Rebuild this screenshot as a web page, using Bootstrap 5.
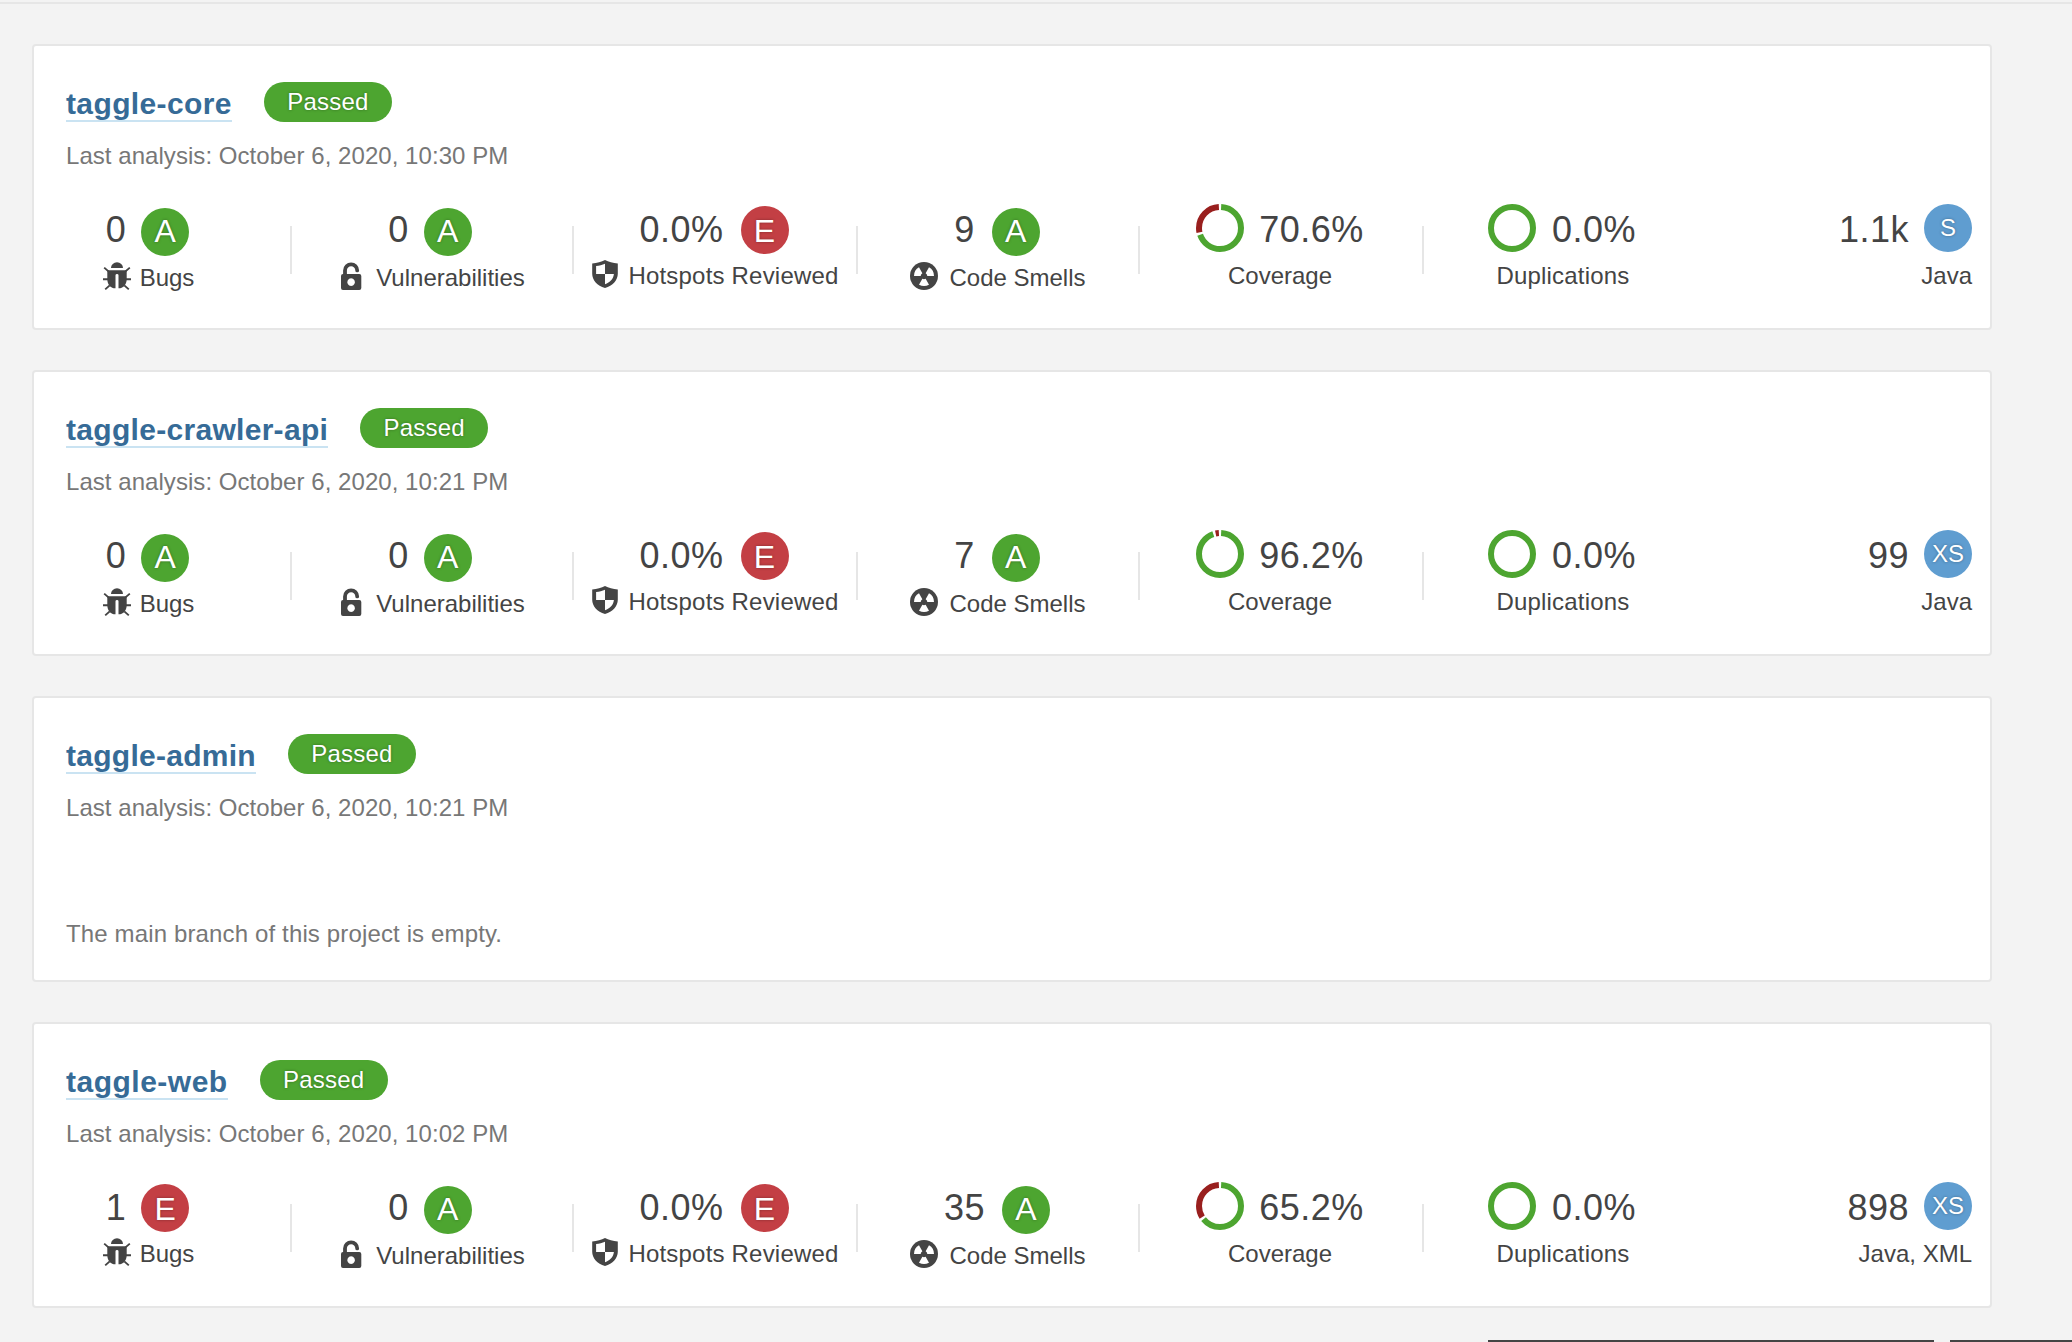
<!DOCTYPE html>
<html lang="en">
<head>
<meta charset="utf-8">
<meta name="viewport" content="width=device-width, initial-scale=1">
<title>Projects</title>
<link href="https://cdn.jsdelivr.net/npm/bootstrap@5.3.0/dist/css/bootstrap.min.css" rel="stylesheet">
<style>
body{background:#f3f3f3;color:#444;font-family:"Liberation Sans",Arial,sans-serif;font-size:24px;line-height:32px;height:1342px;overflow:hidden}
.top-rule{height:4px;border-bottom:2px solid #e6e6e6}
.project-list{padding:40px 80px 0 32px;gap:40px;height:1336px}
.project{height:286px;border:2px solid #e6e6e6;border-radius:4px;background:#fff;flex:none}
.project-head{padding:36px 32px 0;height:76px;gap:32px}
.project-name{font-weight:700;font-size:30px;line-height:36px;height:40px;color:#366b97;text-decoration:none;border-bottom:2px solid #cae3f2;padding-top:4px;letter-spacing:.38px}
.name-web{letter-spacing:.5px}
.name-admin{letter-spacing:.27px}
.name-api{letter-spacing:.3px}
.gate{height:40px;line-height:40px;border-radius:20px;text-align:center;letter-spacing:.2px;background:#4da530;color:#fff;text-shadow:0 0 3px rgba(0,0,0,.35);width:128px}
.analysis{padding:18px 32px 0;height:82px;color:#777;letter-spacing:.05px}
.empty-note{padding:62px 32px 0;color:#777;letter-spacing:.14px}
.measure{width:283px}
.measure.even{width:282px}
.measure.odd{width:284px}
.measure.first{width:256px}
.rule{width:2px;height:48px;margin-top:22px;margin-right:-2px;background:#e6e6e6;flex:none}
.first .rule{margin-left:29px}
.figures{height:56px}
.num{font-size:36px;line-height:51px;letter-spacing:.5px}
.gap-n{gap:15px}
.gap-e{gap:17px}
.rating{width:48px;height:48px;border-radius:50%;color:#fff;text-align:center;font-size:32px;text-shadow:0 0 3px rgba(0,0,0,.35);flex:none}
.rate-a{background:#4da530;margin-top:4px;line-height:46px}
.rate-e{background:#c33f44;margin-top:2px;line-height:50px}
.rate-size{background:#5f9dd0;font-size:24px;line-height:48px}
.lbl{height:32px;white-space:nowrap}
.lbl svg{width:32px;height:32px;margin-top:-2px;fill:#444;flex:none}
.low{margin-top:2px}
.gap-i{gap:7px}
.gap-w{gap:9px}
.nudge{padding-right:2px}
.wide{letter-spacing:.2px}
.ring{width:48px;height:48px;fill:none;stroke-width:6;stroke:#4da530;flex:none}
.ring .miss{stroke:#991f1e}
.size-col{width:268px}
.bar-a{height:2px;width:446px;background:#444}
.bar-b{height:2px;width:122px;background:#444}
</style>
<script src="https://cdn.jsdelivr.net/npm/bootstrap@5.3.0/dist/js/bootstrap.bundle.min.js"></script>
</head>
<body>
<svg class="d-none">
<symbol id="bug" viewBox="0 0 32 32"><path d="M10 8a6 5.800 0 0 1 12 0zM6.300 10.200h19.400V19c0 4.800-2.400 8.200-6.400 9.300h-1.800V15.200q0-1.200-1.500-1.200t-1.500 1.200v13.100h-1.800C8.700 27.200 6.300 23.800 6.300 19z"/><path d="M3.200 7.600l4.300 3.800M28.800 7.600l-4.300 3.800M2 19.200h5M30 19.200h-5M4.200 29.400l4.500-4M27.800 29.400l-4.500-4" fill="none" stroke="#444" stroke-width="1.900"/></symbol>
<symbol id="lock" viewBox="0 0 32 32"><path fill-rule="evenodd" d="M8 14h16.300a2 2 0 0 1 2 2v12a2 2 0 0 1-2 2H8a2 2 0 0 1-2-2V16a2 2 0 0 1 2-2zm8.100 4.300a3.800 3.800 0 1 0 .01 0z"/><path d="M10 15v-4.600a6.100 6.100 0 0 1 12.200 0" fill="none" stroke="#444" stroke-width="3.800" stroke-linecap="round"/></symbol>
<symbol id="shield" viewBox="0 0 32 32"><path fill-rule="evenodd" d="M16 2c3.500 2 8 3.100 12.800 3.400v10.400c0 6.300-5 12-12.800 14.200C8.200 27.800 3.200 22.100 3.200 15.800V5.400C8 5.100 12.500 4 16 2zM16 5.800c-2.600 1.200-5.700 2-8.900 2.300V16H16zM16 16v10.200c5-1.700 8.400-5.300 8.900-10.200z"/></symbol>
<symbol id="smell" viewBox="0 0 32 32"><circle cx="16" cy="16" r="14"/><path fill="#fff" d="M12.700 16a3.300 3.300 0 0 1 1.650-2.860L11 7.340A10 10 0 0 0 6 16zM19.300 16a3.300 3.300 0 0 0-1.650-2.860L21 7.340A10 10 0 0 1 26 16zM14.350 18.860a3.300 3.300 0 0 0 3.300 0L21 24.660a10 10 0 0 1-10 0z"/></symbol>
</svg>
<div class="top-rule"></div>
<main class="project-list d-flex flex-column">

<section class="project">
<div class="project-head d-flex align-items-start"><a class="project-name" href="#">taggle-core</a><span class="gate">Passed</span></div>
<div class="analysis">Last analysis: October 6, 2020, 10:30 PM</div>
<div class="d-flex">
<div class="measure first d-flex"><div class="flex-grow-1"><div class="figures d-flex justify-content-center gap-n"><span class="num">0</span><span class="rating rate-a">A</span></div><div class="lbl low d-flex justify-content-center gap-i"><svg><use href="#bug"/></svg>Bugs</div></div><div class="rule"></div></div>
<div class="measure even d-flex"><div class="flex-grow-1 nudge"><div class="figures d-flex justify-content-center gap-n"><span class="num">0</span><span class="rating rate-a">A</span></div><div class="lbl low d-flex justify-content-center gap-w"><svg><use href="#lock"/></svg>Vulnerabilities</div></div><div class="rule"></div></div>
<div class="measure odd d-flex"><div class="flex-grow-1"><div class="figures d-flex justify-content-center gap-e"><span class="num">0.0%</span><span class="rating rate-e">E</span></div><div class="lbl wide d-flex justify-content-center gap-i"><svg><use href="#shield"/></svg>Hotspots Reviewed</div></div><div class="rule"></div></div>
<div class="measure even d-flex"><div class="flex-grow-1"><div class="figures d-flex justify-content-center gap-e"><span class="num">9</span><span class="rating rate-a">A</span></div><div class="lbl low d-flex justify-content-center gap-w"><svg><use href="#smell"/></svg>Code Smells</div></div><div class="rule"></div></div>
<div class="measure odd d-flex"><div class="flex-grow-1"><div class="figures d-flex justify-content-center gap-n"><svg class="ring" viewBox="0 0 48 48"><g transform="rotate(-90 24 24)"><circle cx="24" cy="24" r="21" pathLength="100" stroke-dasharray="68.800 100" stroke-dashoffset="-.9"/><circle class="miss" cx="24" cy="24" r="21" pathLength="100" stroke-dasharray="27.600 100" stroke-dashoffset="-71.500"/></g></svg><span class="num">70.6%</span></div><div class="lbl text-center">Coverage</div></div><div class="rule"></div></div>
<div class="measure even"><div class="figures d-flex justify-content-center gap-3 nudge"><svg class="ring" viewBox="0 0 48 48"><circle cx="24" cy="24" r="21"/></svg><span class="num">0.0%</span></div><div class="lbl wide text-center">Duplications</div></div>
<div class="size-col"><div class="figures d-flex justify-content-end gap-n"><span class="num">1.1k</span><span class="rating rate-size">S</span></div><div class="lbl text-end">Java</div></div>
</div>
</section>

<section class="project">
<div class="project-head d-flex align-items-start"><a class="project-name name-api" href="#">taggle-crawler-api</a><span class="gate">Passed</span></div>
<div class="analysis">Last analysis: October 6, 2020, 10:21 PM</div>
<div class="d-flex">
<div class="measure first d-flex"><div class="flex-grow-1"><div class="figures d-flex justify-content-center gap-n"><span class="num">0</span><span class="rating rate-a">A</span></div><div class="lbl low d-flex justify-content-center gap-i"><svg><use href="#bug"/></svg>Bugs</div></div><div class="rule"></div></div>
<div class="measure even d-flex"><div class="flex-grow-1 nudge"><div class="figures d-flex justify-content-center gap-n"><span class="num">0</span><span class="rating rate-a">A</span></div><div class="lbl low d-flex justify-content-center gap-w"><svg><use href="#lock"/></svg>Vulnerabilities</div></div><div class="rule"></div></div>
<div class="measure odd d-flex"><div class="flex-grow-1"><div class="figures d-flex justify-content-center gap-e"><span class="num">0.0%</span><span class="rating rate-e">E</span></div><div class="lbl wide d-flex justify-content-center gap-i"><svg><use href="#shield"/></svg>Hotspots Reviewed</div></div><div class="rule"></div></div>
<div class="measure even d-flex"><div class="flex-grow-1"><div class="figures d-flex justify-content-center gap-e"><span class="num">7</span><span class="rating rate-a">A</span></div><div class="lbl low d-flex justify-content-center gap-w"><svg><use href="#smell"/></svg>Code Smells</div></div><div class="rule"></div></div>
<div class="measure odd d-flex"><div class="flex-grow-1"><div class="figures d-flex justify-content-center gap-n"><svg class="ring" viewBox="0 0 48 48"><g transform="rotate(-90 24 24)"><circle cx="24" cy="24" r="21" pathLength="100" stroke-dasharray="93.900 100" stroke-dashoffset="-.9"/><circle class="miss" cx="24" cy="24" r="21" pathLength="100" stroke-dasharray="2.500 100" stroke-dashoffset="-96.600"/></g></svg><span class="num">96.2%</span></div><div class="lbl text-center">Coverage</div></div><div class="rule"></div></div>
<div class="measure even"><div class="figures d-flex justify-content-center gap-3 nudge"><svg class="ring" viewBox="0 0 48 48"><circle cx="24" cy="24" r="21"/></svg><span class="num">0.0%</span></div><div class="lbl wide text-center">Duplications</div></div>
<div class="size-col"><div class="figures d-flex justify-content-end gap-n"><span class="num">99</span><span class="rating rate-size">XS</span></div><div class="lbl text-end">Java</div></div>
</div>
</section>

<section class="project">
<div class="project-head d-flex align-items-start"><a class="project-name name-admin" href="#">taggle-admin</a><span class="gate">Passed</span></div>
<div class="analysis">Last analysis: October 6, 2020, 10:21 PM</div>
<div class="empty-note">The main branch of this project is empty.</div>
</section>

<section class="project">
<div class="project-head d-flex align-items-start"><a class="project-name name-web" href="#">taggle-web</a><span class="gate">Passed</span></div>
<div class="analysis">Last analysis: October 6, 2020, 10:02 PM</div>
<div class="d-flex">
<div class="measure first d-flex"><div class="flex-grow-1"><div class="figures d-flex justify-content-center gap-n"><span class="num">1</span><span class="rating rate-e">E</span></div><div class="lbl d-flex justify-content-center gap-i"><svg><use href="#bug"/></svg>Bugs</div></div><div class="rule"></div></div>
<div class="measure even d-flex"><div class="flex-grow-1 nudge"><div class="figures d-flex justify-content-center gap-n"><span class="num">0</span><span class="rating rate-a">A</span></div><div class="lbl low d-flex justify-content-center gap-w"><svg><use href="#lock"/></svg>Vulnerabilities</div></div><div class="rule"></div></div>
<div class="measure odd d-flex"><div class="flex-grow-1"><div class="figures d-flex justify-content-center gap-e"><span class="num">0.0%</span><span class="rating rate-e">E</span></div><div class="lbl wide d-flex justify-content-center gap-i"><svg><use href="#shield"/></svg>Hotspots Reviewed</div></div><div class="rule"></div></div>
<div class="measure even d-flex"><div class="flex-grow-1"><div class="figures d-flex justify-content-center gap-e"><span class="num">35</span><span class="rating rate-a">A</span></div><div class="lbl low d-flex justify-content-center gap-w"><svg><use href="#smell"/></svg>Code Smells</div></div><div class="rule"></div></div>
<div class="measure odd d-flex"><div class="flex-grow-1"><div class="figures d-flex justify-content-center gap-n"><svg class="ring" viewBox="0 0 48 48"><g transform="rotate(-90 24 24)"><circle cx="24" cy="24" r="21" pathLength="100" stroke-dasharray="63.400 100" stroke-dashoffset="-.9"/><circle class="miss" cx="24" cy="24" r="21" pathLength="100" stroke-dasharray="33 100" stroke-dashoffset="-66.100"/></g></svg><span class="num">65.2%</span></div><div class="lbl text-center">Coverage</div></div><div class="rule"></div></div>
<div class="measure even"><div class="figures d-flex justify-content-center gap-3 nudge"><svg class="ring" viewBox="0 0 48 48"><circle cx="24" cy="24" r="21"/></svg><span class="num">0.0%</span></div><div class="lbl wide text-center">Duplications</div></div>
<div class="size-col"><div class="figures d-flex justify-content-end gap-n"><span class="num">898</span><span class="rating rate-size">XS</span></div><div class="lbl text-end">Java, XML</div></div>
</div>
</section>
</main>
<footer class="d-flex justify-content-end gap-3"><div class="bar-a"></div><div class="bar-b"></div></footer>
</body>
</html>
